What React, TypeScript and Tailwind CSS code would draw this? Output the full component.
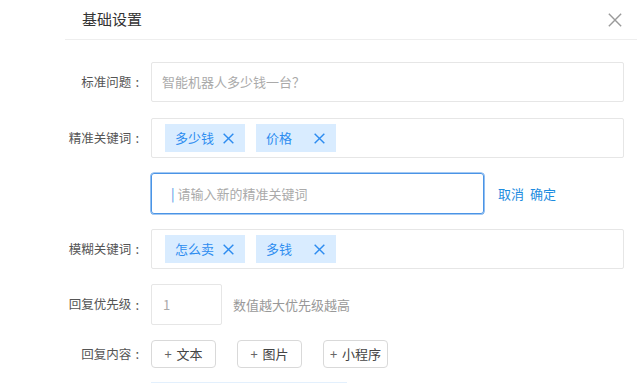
import { Fragment } from "react";

function CrossIcon({ size, className }: { size: number; className?: string }) {
  return (
    <svg width={size} height={size} viewBox="0 0 10 10" className={className} fill="none">
      <path d="M0.6 0.6 L9.4 9.4 M9.4 0.6 L0.6 9.4" stroke="currentColor" strokeWidth={size > 12 ? 1 : 1.3} />
    </svg>
  );
}

function Tag({ text }: { text: string }) {
  return (
    <div className="w-[80px] h-[28px] bg-[#d9ecff] flex items-center justify-between pl-[10px] pr-[11px] text-[13px] text-[#2d8cf0]">
      <span>{text}</span>
      <CrossIcon size={11} />
    </div>
  );
}

function Label({ text }: { text: string }) {
  return (
    <div className="w-[76px] shrink-0 flex items-center justify-end whitespace-nowrap text-[12.5px] text-[#555]">
      <span>{text}</span>
      <span className="ml-[4px] mr-[2px] text-[13px]">:</span>
    </div>
  );
}

const buttons = ["文本", "图片", "小程序"];

export default function App() {
  return (
    <div
      className="w-[637px] h-[383px] overflow-hidden bg-white"
      style={{ fontFamily: '"Noto Sans CJK SC", "Noto Sans", sans-serif' }}
    >
      <div className="ml-[65px] flex flex-col">
        {/* Header */}
        <div className="h-[40px] border-b border-[#eeeeee] flex items-center justify-between pl-[17px] pr-[15px]">
          <span className="text-[15px] text-[#333]">基础设置</span>
          <CrossIcon size={14} className="text-[#9a9a9a]" />
        </div>

        {/* Standard question */}
        <div className="mt-[22px] flex items-center gap-[10px] pr-[13px]">
          <Label text="标准问题" />
          <div className="flex-1 h-[40px] border border-[#e6e6e6] rounded-[2px] flex items-center pl-[10px] text-[13px] text-[#aaa]">
            智能机器人多少钱一台？
          </div>
        </div>

        {/* Exact keywords */}
        <div className="mt-[16px] flex items-center gap-[10px] pr-[13px]">
          <Label text="精准关键词" />
          <div className="flex-1 h-[40px] border border-[#e6e6e6] rounded-[2px] flex items-center gap-[11px] pl-[13px]">
            <Tag text="多少钱" />
            <Tag text="价格" />
          </div>
        </div>

        {/* New keyword input */}
        <div className="mt-[15px] flex items-center gap-[10px]">
          <div className="w-[76px] shrink-0" />
          <div className="w-[333px] h-[41px] border border-[#4a94e6] shadow-[0_0_0_0.6px_#4a94e6] rounded-[3px] flex items-center pl-[19px] text-[13px]">
            <span className="text-[#4a94e6] mr-[3px]">|</span>
            <span className="text-[#aaa]">请输入新的精准关键词</span>
          </div>
          <div className="ml-[4px] flex gap-[6px] text-[13px] text-[#1d8ce0]">
            <span>取消</span>
            <span>确定</span>
          </div>
        </div>

        {/* Fuzzy keywords */}
        <div className="mt-[15px] flex items-center gap-[10px] pr-[13px]">
          <Label text="模糊关键词" />
          <div className="flex-1 h-[40px] border border-[#e6e6e6] rounded-[2px] flex items-center gap-[11px] pl-[13px]">
            <Tag text="怎么卖" />
            <Tag text="多钱" />
          </div>
        </div>

        {/* Priority */}
        <div className="mt-[15px] flex items-center gap-[10px]">
          <Label text="回复优先级" />
          <div className="w-[71px] h-[41px] border border-[#e6e6e6] rounded-[2px] flex items-center pl-[11px] text-[13px] text-[#aaa]">
            1
          </div>
          <span className="ml-[1px] text-[13px] text-[#999]">数值越大优先级越高</span>
        </div>

        {/* Reply content */}
        <div className="mt-[15px] flex items-center gap-[10px]">
          <Label text="回复内容" />
          <div className="flex gap-[21px]">
            {buttons.map((b) => (
              <Fragment key={b}>
                <div className="w-[65px] h-[28px] border border-[#d9d9d9] rounded-[4px] flex items-center justify-center text-[13px] text-[#444]">
                  <span className="mr-[5px] text-[#666]">+</span>
                  {b}
                </div>
              </Fragment>
            ))}
          </div>
        </div>

        {/* Text area start */}
        <div className="mt-[14px] flex gap-[10px]">
          <div className="w-[76px] shrink-0" />
          <div className="w-[196px] h-[20px] border-t-2 border-[#e3f0fd] bg-[#fbfdff]" />
        </div>
      </div>
    </div>
  );
}
